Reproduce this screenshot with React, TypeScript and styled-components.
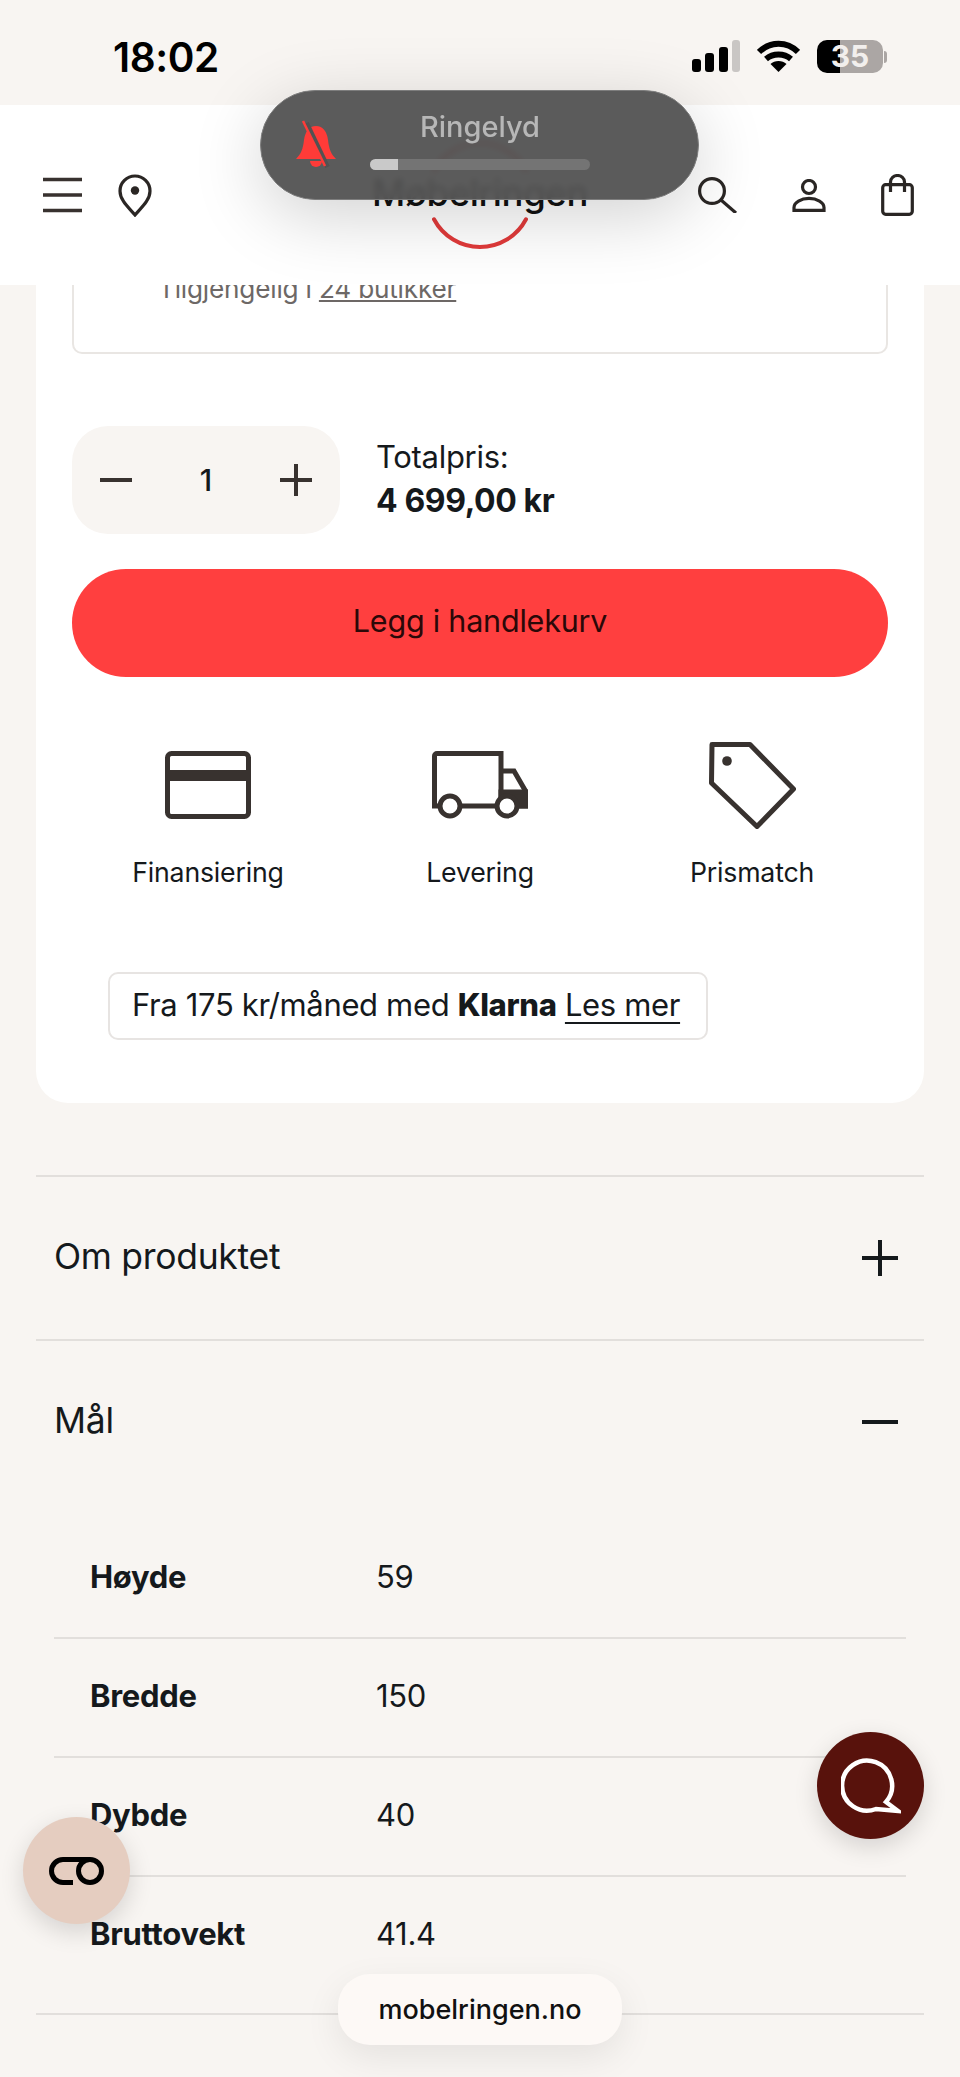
import styled, { createGlobalStyle } from 'styled-components'

const GlobalStyle = createGlobalStyle`
  html, body {
    margin: 0;
    padding: 0;
    background: #f8f5f2;
  }
  body {
    font-family: Inter, "Liberation Sans", sans-serif;
    color: #15191c;
  }
  * {
    box-sizing: border-box;
  }
`

const Page = styled.div`
  position: relative;
  width: 960px;
  height: 2077px;
  overflow: hidden;
  background: #f8f5f2;
`

const StatusBar = styled.div`
  height: 105px;
  padding: 35px 73px 0 113px;
  display: flex;
  justify-content: space-between;
  align-items: flex-start;
`

const Clock = styled.div`
  font-size: 40.5px;
  line-height: 46px;
  font-weight: 600;
  color: #000;
  letter-spacing: -0.4px;
`

const StatusIcons = styled.div`
  display: flex;
  align-items: flex-start;
  gap: 17px;
  padding-top: 5px;
`

const BatteryGroup = styled.div`
  display: flex;
  align-items: center;
  gap: 1px;
  height: 33px;
`

const Battery = styled.div`
  width: 66px;
  height: 33px;
  border-radius: 10px;
  background: linear-gradient(90deg, #000 0 35%, #aba6a4 35% 100%);
  color: #f2efed;
  font-size: 30px;
  line-height: 33px;
  font-weight: 700;
  text-align: center;
`

const BatteryCap = styled.div`
  width: 3px;
  height: 12px;
  border-radius: 0 3px 3px 0;
  background: #aba6a4;
`

const Header = styled.header`
  position: relative;
  z-index: 2;
  height: 180px;
  padding: 0 46px 0 43px;
  background: #fff;
  display: flex;
  align-items: center;
  justify-content: space-between;
`

const HeaderGroup = styled.div<{ $gap: number }>`
  display: flex;
  align-items: center;
  gap: ${props => props.$gap}px;
`

const Logo = styled.div`
  position: absolute;
  left: 330px;
  top: 36px;
  width: 300px;
  height: 104px;
  text-align: center;
  font-size: 36.5px;
  line-height: 104px;
  font-weight: 500;
  color: #111;
  letter-spacing: -0.4px;
`

const LogoRing = styled.svg`
  position: absolute;
  left: 94px;
  top: -2px;
`

const Hud = styled.div`
  position: absolute;
  z-index: 5;
  left: 260px;
  top: 90px;
  width: 439px;
  height: 110px;
  border-radius: 55px;
  background: rgba(82, 82, 82, 0.95);
  border: 1.5px solid #7d7d7d;
  backdrop-filter: blur(3px);
  box-shadow: 0 16px 70px rgba(0, 0, 0, 0.18);
  display: flex;
  align-items: center;
  padding-left: 35px;
`

const HudBody = styled.div`
  margin-left: 34px;
  padding-bottom: 10px;
  width: 220px;
  display: flex;
  flex-direction: column;
  align-items: center;
`

const HudLabel = styled.div`
  font-size: 29px;
  line-height: 34px;
  font-weight: 500;
  color: #b7b7b7;
`

const HudTrack = styled.div`
  margin-top: 15px;
  width: 100%;
  height: 11px;
  border-radius: 6px;
  overflow: hidden;
  background: #747474;
`

const HudFill = styled.div`
  width: 28px;
  height: 100%;
  background: #c9c9c9;
`

const Card = styled.section`
  margin: 0 36px;
  height: 818px;
  padding: 0 36px;
  background: #fff;
  border-radius: 0 0 32px 32px;
`

const StockBox = styled.div`
  display: flow-root;
  height: 69px;
  padding: 0 0 0 84px;
  border: 2px solid #e9e6e3;
  border-top: none;
  border-radius: 0 0 10px 10px;
  font-size: 26.2px;
  line-height: 31px;
  color: #6d6866;
  letter-spacing: -0.2px;
`

const StockText = styled.div`
  margin-top: -12px;
`

const StockLink = styled.span`
  text-decoration: underline;
`

const BuyRow = styled.div`
  margin-top: 72px;
  display: flex;
  align-items: center;
  gap: 36px;
`

const Stepper = styled.div`
  width: 268px;
  height: 108px;
  padding: 0 28px;
  border-radius: 36px;
  background: #f8f5f2;
  display: flex;
  align-items: center;
  justify-content: space-between;
  font-size: 30px;
  font-weight: 500;
`

const PriceBlock = styled.div`
  padding-bottom: 3px;
`

const PriceLabel = styled.div`
  font-size: 31px;
  line-height: 44px;
  letter-spacing: -0.3px;
`

const PriceValue = styled.div`
  font-size: 32px;
  line-height: 44px;
  font-weight: 700;
  letter-spacing: -0.4px;
`

const AddButton = styled.button`
  display: block;
  width: 816px;
  height: 108px;
  margin-top: 35px;
  padding: 0 0 6px;
  border: none;
  border-radius: 54px;
  background: #ff3f3f;
  color: #2b0808;
  font-family: inherit;
  font-size: 30.5px;
  letter-spacing: -0.2px;
`

const Perks = styled.div`
  margin-top: 64px;
  display: grid;
  grid-template-columns: 272px 272px 272px;
`

const Perk = styled.div`
  display: flex;
  flex-direction: column;
  align-items: center;
`

const PerkIcon = styled.div`
  height: 88px;
  display: flex;
  align-items: center;
`

const PerkLabel = styled.div`
  margin-top: 26px;
  font-size: 26.7px;
  line-height: 34px;
  letter-spacing: -0.2px;
`

const Klarna = styled.div`
  width: 600px;
  height: 68px;
  margin: 83px 0 0 36px;
  padding: 0 0 3px 22px;
  border: 2px solid #e7e4e2;
  border-radius: 10px;
  display: flex;
  align-items: center;
  font-size: 31px;
  letter-spacing: -0.35px;
`

const KlarnaText = styled.span`
  white-space: pre;
`

const KlarnaMark = styled.b`
  font-weight: 800;
`

const KlarnaLink = styled.span`
  text-decoration: underline;
  text-underline-offset: 6px;
  text-decoration-thickness: 2px;
`

const Accordion = styled.div`
  margin: 72px 36px 0;
`

const AccordionRow = styled.div`
  height: 164px;
  padding: 0 26px 0 18px;
  border-top: 2px solid #e2dfdc;
  display: flex;
  align-items: center;
  justify-content: space-between;
  font-size: 35.5px;
  letter-spacing: -0.3px;
`

const AccordionTitle = styled.span`
  padding-bottom: 3px;
`

const SpecTable = styled.div`
  margin: 17px 18px 0;
`

const SpecRow = styled.div`
  height: 119px;
  padding: 0 0 5px 36px;
  border-bottom: 2px solid #e2dfdc;
  display: flex;
  align-items: center;
  font-size: 31px;
  letter-spacing: -0.3px;

  &:last-child {
    border-bottom: none;
    padding-bottom: 7px;
  }
`

const SpecName = styled.div`
  width: 286px;
  font-weight: 700;
`

const BottomRule = styled.div`
  margin-top: 17px;
  height: 2px;
  background: #e2dfdc;
`

const RoundButton = styled.div<{ $bg: string; $left: number; $top: number }>`
  position: absolute;
  z-index: 3;
  left: ${props => props.$left}px;
  top: ${props => props.$top}px;
  width: 107px;
  height: 107px;
  border-radius: 50%;
  background: ${props => props.$bg};
  box-shadow: 0 8px 24px rgba(0, 0, 0, 0.14);
  display: flex;
  align-items: center;
  justify-content: center;
`

const UrlPill = styled.div`
  position: absolute;
  z-index: 3;
  left: 338px;
  top: 1974px;
  width: 284px;
  height: 71px;
  border-radius: 32px;
  background: #fdf9f6;
  box-shadow: 0 12px 36px rgba(0, 0, 0, 0.08);
  display: flex;
  align-items: center;
  justify-content: center;
  font-size: 27px;
  font-weight: 500;
  color: #111;
`

const LineIcon = styled.svg`
  display: block;
  fill: none;
  stroke: #38322f;
  stroke-width: 5;
`

function PlusIcon({ minus, size = 36, weight = 4, color = '#15191c' }: { minus?: boolean; size?: number; weight?: number; color?: string }) {
  return (
    <svg width={size} height={size} viewBox="0 0 36 36" fill="none" stroke={color} strokeWidth={weight}>
      <path d="M0 18h36" />
      {!minus && <path d="M18 0v36" />}
    </svg>
  )
}

const specs = [
  ['Høyde', '59'],
  ['Bredde', '150'],
  ['Dybde', '40'],
  ['Bruttovekt', '41.4'],
]

export default function App() {
  return (
    <Page>
      <GlobalStyle />
      <StatusBar>
        <Clock>18:02</Clock>
        <StatusIcons>
          <svg width="48" height="32" viewBox="0 0 48 32" fill="#000">
            <rect x="0" y="19" width="9" height="13" rx="3" />
            <rect x="13" y="13" width="9" height="19" rx="3" />
            <rect x="27" y="7" width="9" height="25" rx="3" />
            <rect x="40" y="0" width="8" height="32" rx="3" fill="#c9c6c4" />
          </svg>
          <svg width="43" height="32" viewBox="0 0 43 32" fill="none" stroke="#000" strokeWidth="6">
            <path d="M2 12C13 1 30 1 41 12" />
            <path d="M9 19c7-6 18-6 25 0" />
            <path d="M21.5 32l-8-8c4-4 12-4 16 0z" fill="#000" stroke="none" />
          </svg>
          <BatteryGroup>
            <Battery>35</Battery>
            <BatteryCap />
          </BatteryGroup>
        </StatusIcons>
      </StatusBar>

      <Header>
        <HeaderGroup $gap={36}>
          <svg width="39" height="36" viewBox="0 0 39 36" stroke="#38322f" strokeWidth="3.6">
            <path d="M0 2.5h39M0 18h39M0 33.5h39" />
          </svg>
          <svg width="34" height="43" viewBox="0 0 34 43" fill="none" stroke="#2a2624" strokeWidth="3.2">
            <path d="M17 41C10 33 2 26 2 17a15 15 0 0 1 30 0c0 9-8 16-15 24z" />
            <circle cx="17" cy="16.5" r="4.2" fill="#2a2624" stroke="none" />
          </svg>
        </HeaderGroup>
        <Logo>
          Møbelringen
          <LogoRing width="112" height="112" viewBox="0 0 112 112" fill="none" stroke="#e03a3a" strokeWidth="4" strokeLinecap="round">
            <path d="M10 80.3A52 52 0 0 0 102 80.3" />
            <path d="M10 31.7A52 52 0 0 1 102 31.7" />
          </LogoRing>
        </Logo>
        <HeaderGroup $gap={55}>
          <svg width="39" height="36" viewBox="0 0 39 36" fill="none" stroke="#2a2624" strokeWidth="3.2">
            <circle cx="14" cy="14" r="12.4" />
            <path d="M23 23l15 13" />
          </svg>
          <svg width="34" height="33" viewBox="0 0 34 33" fill="none" stroke="#2a2624" strokeWidth="3.2">
            <circle cx="17" cy="8" r="6.5" />
            <path d="M2 31.4v-3c0-5 7-9 15-9s15 4 15 9v3z" />
          </svg>
          <svg width="33" height="42" viewBox="0 0 33 42" fill="none" stroke="#2a2624" strokeWidth="3.2">
            <rect x="1.7" y="10.7" width="29.6" height="29.6" rx="3" />
            <path d="M9.5 18V8a7 6.5 0 0 1 14 0v10" />
          </svg>
        </HeaderGroup>
      </Header>

      <Hud>
        <svg width="40" height="50" viewBox="0 0 40 50">
          <path d="M20 6c7 0 11 6 12 14 1 9 3 14 8 19H0c5-5 7-10 8-19C9 12 13 6 20 6z" fill="#ff3b38" />
          <path d="M14 41a6 6 0 0 0 12 0z" fill="#ff3b38" />
          <path d="M10.5 3l21 44" stroke="#525252" strokeWidth="5" />
          <path d="M7 1l22 45" stroke="#ff3b38" strokeWidth="2.5" />
        </svg>
        <HudBody>
          <HudLabel>Ringelyd</HudLabel>
          <HudTrack>
            <HudFill />
          </HudTrack>
        </HudBody>
      </Hud>

      <Card>
        <StockBox>
          <StockText>
            Tilgjengelig i <StockLink>24 butikker</StockLink>
          </StockText>
        </StockBox>
        <BuyRow>
          <Stepper>
            <PlusIcon minus size={32} weight={4.5} color="#38322f" />
            <span>1</span>
            <PlusIcon size={32} weight={4.5} color="#38322f" />
          </Stepper>
          <PriceBlock>
            <PriceLabel>Totalpris:</PriceLabel>
            <PriceValue>4 699,00 kr</PriceValue>
          </PriceBlock>
        </BuyRow>
        <AddButton>Legg i handlekurv</AddButton>
        <Perks>
          <Perk>
            <PerkIcon>
              <LineIcon width="86" height="68" viewBox="0 0 86 68">
                <rect x="2.5" y="2.5" width="81" height="63" rx="4" />
                <path d="M2 24.5h82" strokeWidth="11" />
              </LineIcon>
            </PerkIcon>
            <PerkLabel>Finansiering</PerkLabel>
          </Perk>
          <Perk>
            <PerkIcon>
              <LineIcon width="96" height="68" viewBox="0 0 96 68">
                <path d="M8 55H2.5V5a2.5 2.5 0 0 1 2.5-2.5h64V55H29" />
                <path d="M69 20h13l11.5 20v15H86" />
                <path d="M69 41h24.5v14H69z" fill="#38322f" />
                <circle cx="18" cy="55" r="10" fill="#fff" />
                <circle cx="75" cy="55" r="10" fill="#fff" />
              </LineIcon>
            </PerkIcon>
            <PerkLabel>Levering</PerkLabel>
          </Perk>
          <Perk>
            <PerkIcon>
              <LineIcon width="87" height="87" viewBox="0 0 87 87">
                <path d="M3 2.5H41L84.5 47 48 84.5 2.5 41z" strokeLinejoin="round" />
                <circle cx="18" cy="19" r="4.8" fill="#38322f" stroke="none" />
              </LineIcon>
            </PerkIcon>
            <PerkLabel>Prismatch</PerkLabel>
          </Perk>
        </Perks>
        <Klarna>
          <KlarnaText>
            Fra 175 kr/måned med <KlarnaMark>Klarna</KlarnaMark> <KlarnaLink>Les mer</KlarnaLink>
          </KlarnaText>
        </Klarna>
      </Card>

      <Accordion>
        <AccordionRow>
          <AccordionTitle>Om produktet</AccordionTitle>
          <PlusIcon />
        </AccordionRow>
        <AccordionRow>
          <AccordionTitle>Mål</AccordionTitle>
          <PlusIcon minus />
        </AccordionRow>
        <SpecTable>
          {specs.map(([name, value]) => (
            <SpecRow key={name}>
              <SpecName>{name}</SpecName>
              {value}
            </SpecRow>
          ))}
        </SpecTable>
        <BottomRule />
      </Accordion>

      <RoundButton $bg="#58120c" $left={817} $top={1732}>
        <svg width="60" height="57" viewBox="0 0 60 57" fill="none" stroke="#fff" strokeWidth="4.5">
          <path d="M45 45A25 25 0 1 0 35 52L57 54Z" />
        </svg>
      </RoundButton>
      <RoundButton $bg="#e5cdc0" $left={23} $top={1817}>
        <svg width="56" height="28" viewBox="0 0 56 28" fill="none" stroke="#000" strokeWidth="5">
          <path d="M24 25.5H14a11.5 11.5 0 0 1 0-23H41" />
          <circle cx="41" cy="14" r="11.5" />
        </svg>
      </RoundButton>
      <UrlPill>mobelringen.no</UrlPill>
    </Page>
  )
}
